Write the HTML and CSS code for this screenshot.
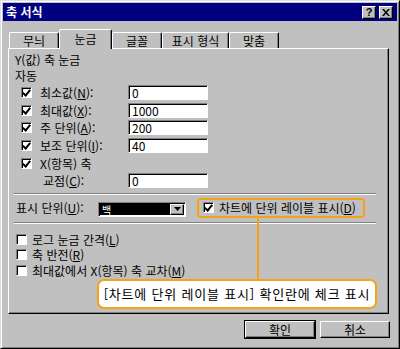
FILE: index.html
```html
<!DOCTYPE html>
<html lang="ko">
<head>
  <meta charset="UTF-8" />
  <title>축 서식</title>
  <link rel="stylesheet" href="styles.css">
</head>
<body>
  <div class="window">
    <div class="titlebar">
      <span class="title">축 서식</span>
      <div class="caption-btns">
        <span class="cap-btn help">?</span>
        <span class="cap-btn">
          <svg width="8" height="7" viewBox="0 0 8 7"><path d="M0 0h2l2 2.5L6 0h2L5 3.5 8 7H6L4 4.5 2 7H0l3-3.5z" fill="#000"/></svg>
        </span>
      </div>
    </div>

    <div class="tabs">
      <div class="tab">무늬</div>
      <div class="tab active">눈금</div>
      <div class="tab">글꼴</div>
      <div class="tab">표시 형식</div>
      <div class="tab">맞춤</div>
    </div>

    <div class="panel">
      <div class="heading">Y(값) 축 눈금</div>
      <div class="heading">자동</div>

      <div class="row">
        <span class="check on"></span>
        <span class="label">최소값(<u>N</u>):</span>
        <span class="field">0</span>
      </div>
      <div class="row">
        <span class="check on"></span>
        <span class="label">최대값(<u>X</u>):</span>
        <span class="field">1000</span>
      </div>
      <div class="row">
        <span class="check on"></span>
        <span class="label">주 단위(<u>A</u>):</span>
        <span class="field">200</span>
      </div>
      <div class="row">
        <span class="check on"></span>
        <span class="label">보조 단위(<u>I</u>):</span>
        <span class="field">40</span>
      </div>
      <div class="row">
        <span class="check on"></span>
        <span class="label">X(항목) 축</span>
      </div>
      <div class="row">
        <span class="label indent">교점(<u>C</u>):</span>
        <span class="field">0</span>
      </div>

      <div class="etched"></div>

      <div class="unit-row">
        <span class="unit-label">표시 단위(<u>U</u>):</span>
        <div class="combo">
          <span class="combo-value">백</span>
          <span class="combo-btn">
            <svg width="7" height="4" viewBox="0 0 7 4"><path d="M0 0h7L3.5 4z" fill="#000"/></svg>
          </span>
        </div>
        <div class="highlight">
          <span class="check on"></span>
          <span>차트에 단위 레이블 표시(<u>D</u>)</span>
        </div>
      </div>

      <div class="etched second"></div>

      <div class="options">
        <div class="opt"><span class="check"></span><span>로그 눈금 간격(<u>L</u>)</span></div>
        <div class="opt"><span class="check"></span><span>축 반전(<u>R</u>)</span></div>
        <div class="opt"><span class="check"></span><span>최대값에서 X(항목) 축 교차(<u>M</u>)</span></div>
      </div>

      <div class="callout">[차트에 단위 레이블 표시] 확인란에 체크 표시</div>
      <span class="connector"></span>
    </div>

    <div class="actions">
      <button class="btn default">확인</button>
      <button class="btn">취소</button>
    </div>
  </div>
</body>
</html>
```

FILE: styles.css
```css
* {
  box-sizing: border-box;
  margin: 0;
  padding: 0;
}
body {
  font-family: 'Noto Sans CJK KR', 'Liberation Sans', sans-serif;
  font-size: 12px;
  color: #000;
  background: #c0c0c0;
}
u {
  text-decoration: underline;
}
.window {
  width: 400px;
  height: 349px;
  background: #c0c0c0;
  border: 1px solid;
  border-color: #dfdfdf #000 #000 #dfdfdf;
  box-shadow: inset 1px 1px #fff, inset -1px -1px #808080;
  padding: 2px;
}
.titlebar {
  height: 18px;
  background: #000080;
  display: flex;
  align-items: center;
  justify-content: space-between;
  padding: 0 4px 0 3px;
}
.title {
  color: #fff;
  font-weight: bold;
  font-size: 12px;
  line-height: 18px;
}
.caption-btns {
  display: flex;
  gap: 3px;
}
.cap-btn {
  width: 14px;
  height: 13px;
  background: #c0c0c0;
  border: 1px solid;
  border-color: #fff #000 #000 #fff;
  box-shadow: inset -1px -1px #808080;
  display: flex;
  align-items: center;
  justify-content: center;
  font-family: 'Liberation Sans', sans-serif;
  font-weight: bold;
  font-size: 11px;
  line-height: 1;
}

/* tabs */
.tabs {
  display: flex;
  align-items: flex-end;
  height: 19px;
  margin-top: 8px;
  padding-left: 6px;
  position: relative;
  z-index: 1;
}
.tab {
  height: 16px;
  width: 50px;
  text-align: center;
  line-height: 15px;
  border: 1px solid;
  border-bottom: none;
  border-color: #fff #000 transparent #fff;
  border-radius: 2px 2px 0 0;
  box-shadow: inset -1px 0 #808080;
}
.tab.active {
  height: 20px;
  width: 53px;
  margin-bottom: -1px;
  background: #c0c0c0;
  line-height: 18px;
}
.tab:nth-child(4) {
  width: 67px;
}

/* panel */
.panel {
  position: relative;
  width: 381px;
  height: 266px;
  margin-left: 5px;
  border: 1px solid;
  border-color: #fff #000 #000 #fff;
  box-shadow: inset -1px -1px #808080;
  padding: 3px 6px 0 6px;
}
.heading {
  height: 16px;
  line-height: 16px;
}
.row {
  display: flex;
  align-items: center;
  height: 17.6px;
}
.check {
  width: 11px;
  height: 11px;
  flex: none;
  background: #fff;
  border: 1px solid;
  border-color: #808080 #fff #fff #808080;
  box-shadow: inset 1px 1px #000;
  position: relative;
}
.check.on::after {
  content: '';
  position: absolute;
  left: 2px;
  top: 0px;
  width: 3px;
  height: 6px;
  border: solid #000;
  border-width: 0 2px 2px 0;
  transform: rotate(40deg);
}
.row .check {
  margin-left: 6px;
}
.label {
  width: 88px;
  margin-left: 8px;
}
.label.indent {
  width: 85px;
  margin-left: 28px;
}
.field {
  width: 80px;
  height: 15px;
  background: #fff;
  border: 1px solid;
  border-color: #808080 #fff #fff #808080;
  box-shadow: inset 1px 1px #000;
  padding-left: 3px;
  line-height: 13px;
}
.etched {
  height: 2px;
  margin: 3px 6px 0 -1px;
  border-top: 1px solid #808080;
  border-bottom: 1px solid #fff;
}
.etched.second {
  margin-top: 4px;
}

.unit-row {
  display: flex;
  align-items: center;
  height: 20px;
  margin-top: 3px;
}
.unit-label {
  width: 82px;
  margin-left: 1px;
}
.combo {
  width: 88px;
  height: 15px;
  margin-top: 3px;
  background: #fff;
  border: 1px solid;
  border-color: #808080 #fff #fff #808080;
  box-shadow: inset 1px 1px #000;
  display: flex;
  padding: 1px;
}
.combo-value {
  flex: 1;
  background: #000;
  color: #fff;
  font-size: 10px;
  line-height: 11px;
  padding-left: 2px;
}
.combo-btn {
  width: 14px;
  height: 11px;
  background: #c0c0c0;
  border: 1px solid;
  border-color: #fff #000 #000 #fff;
  box-shadow: inset -1px -1px #808080;
  display: flex;
  align-items: center;
  justify-content: center;
}
.highlight {
  display: flex;
  align-items: center;
  gap: 5px;
  width: 168px;
  height: 20px;
  margin-left: 11px;
  padding-left: 4px;
  border: 2px solid #f5a21a;
  border-radius: 4px;
}

.options {
  margin-top: 8px;
}
.opt {
  display: flex;
  align-items: center;
  gap: 5px;
  height: 15.5px;
  padding-left: 1px;
}

.callout {
  width: 280px;
  height: 30px;
  margin: 1px 0 0 82px;
  background: #fff;
  border: 2px solid #f5a21a;
  border-radius: 7px;
  font-size: 13px;
  letter-spacing: 0.8px;
  line-height: 26px;
  text-align: center;
}
.connector {
  position: absolute;
  left: 248px;
  top: 168px;
  width: 2px;
  height: 64px;
  background: #f5a21a;
}

/* dialog buttons */
.actions {
  display: flex;
  justify-content: flex-end;
  gap: 5px;
  margin-top: 7px;
  padding-right: 7px;
}
.btn {
  width: 70px;
  height: 17px;
  font-family: inherit;
  font-size: 12px;
  line-height: 13px;
  background: #c0c0c0;
  color: #000;
  border: 1px solid;
  border-color: #fff #000 #000 #fff;
  box-shadow: inset -1px -1px #808080;
}
.btn.default {
  outline: 1px solid #000;
}
```
